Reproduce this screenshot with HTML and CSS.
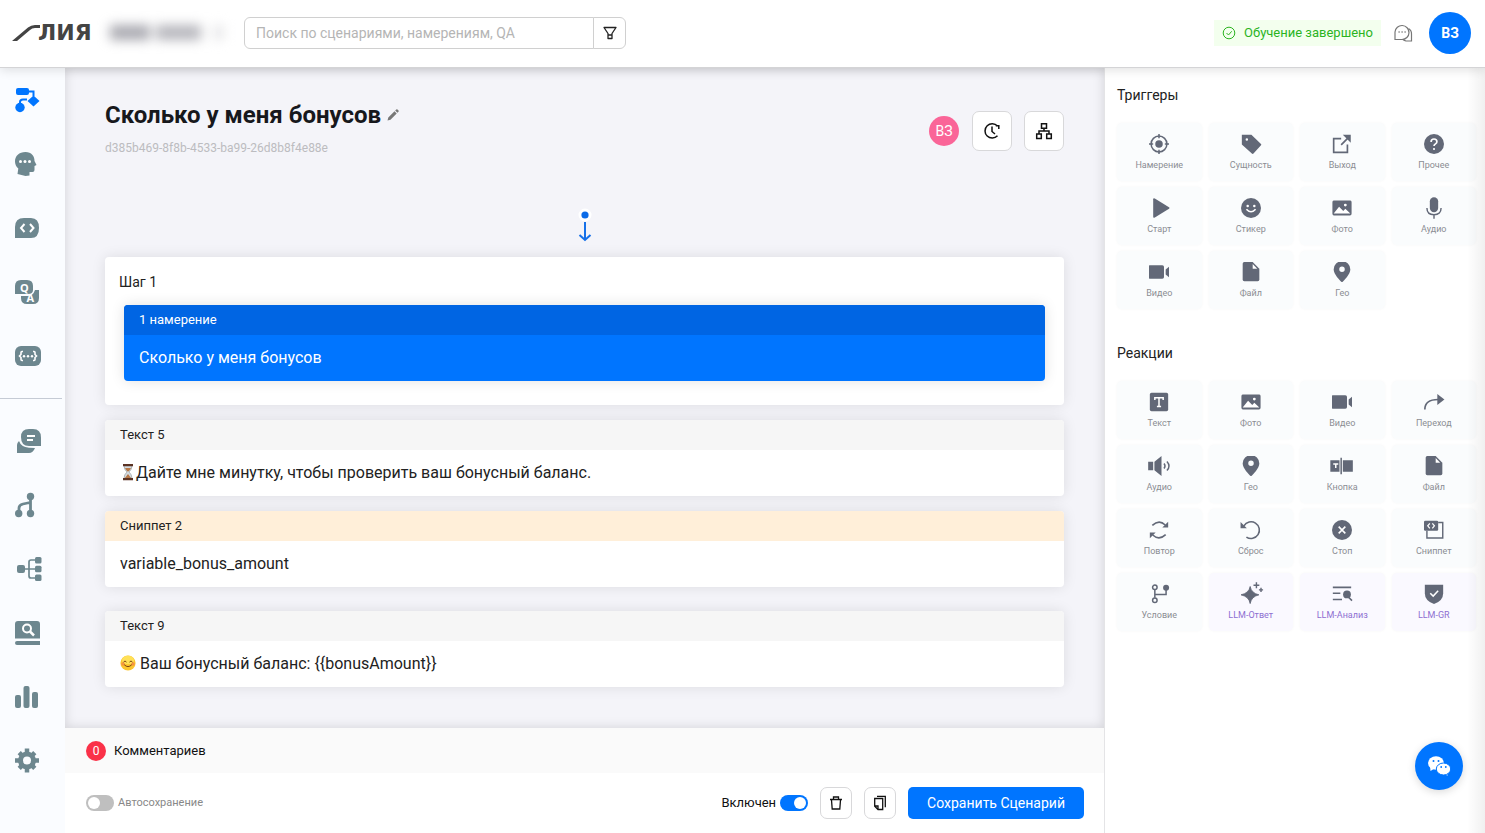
FILE: index.html
```html
<!DOCTYPE html>
<html lang="ru">
<head>
<meta charset="utf-8">
<meta name="viewport" content="width=device-width, initial-scale=1">
<title>Сколько у меня бонусов</title>
<link rel="stylesheet" href="styles.css">
</head>
<body>
<svg class="sprite" aria-hidden="true">
  <symbol id="i-photo" viewBox="0 0 24 24"><path d="M2 3h20a2 2 0 0 1 1.500 2v14a2 2 0 0 1-2 2H2a2 2 0 0 1-1.500-2V5A2 2 0 0 1 2 3z" fill="currentColor"/><path d="M2 18.500 8.500 10.500l5 5 2.500-2.500 6 5.500z" fill="#fff"/><circle cx="16" cy="8.500" r="1.700" fill="#fff"/></symbol>
  <symbol id="i-video" viewBox="0 0 24 24"><rect x="-1" y="4" width="19" height="16" rx="2" fill="currentColor"/><path d="M20 9l5-4v14l-5-4z" fill="currentColor"/></symbol>
  <symbol id="i-file" viewBox="0 0 24 24"><path d="M4 0h10l8 8v13a2 2 0 0 1-2 2H4a2 2 0 0 1-2-2V2a2 2 0 0 1 2-2z" fill="currentColor"/><path d="M14 2.500v5.500h5.500z" fill="#fff"/></symbol>
  <symbol id="i-geo" viewBox="0 0 24 24"><path d="M12-1a10 10 0 0 0-10 10c0 6.500 10 15.500 10 15.500S22 15.500 22 9A10 10 0 0 0 12-1zm0 13a3.300 3.300 0 1 1 0-6.600 3.300 3.300 0 0 1 0 6.600z" fill="currentColor"/></symbol>
</svg>

<header class="header">
  <a class="logo" href="#" aria-label="ЛИЯ">
    <svg class="logo-tail" viewBox="0 0 28 16" aria-hidden="true"><path d="M0 16 16 2.500Q19 0 23 0h5v3h-5q-3 0-5 2L5 16z" fill="#444"/></svg>
    <span>ЛИЯ</span>
  </a>
  <div class="project" aria-hidden="true"><i></i><b></b><em></em></div>
  <form class="search">
    <input type="search" aria-label="Поиск" placeholder="Поиск по сценариями, намерениям, QA">
    <button type="button" aria-label="Фильтр"><svg width="14" height="14" viewBox="0 0 14 14" fill="none" stroke="#222" stroke-width="1.300" stroke-linejoin="round"><path d="M1 1.500h12L9 7.500v5H5v-5zM5 9h4"/></svg></button>
  </form>
  <div class="status">
    <svg width="14" height="14" viewBox="0 0 14 14" fill="none" stroke="#2bb41f"><circle cx="7" cy="7" r="5.800"/><path d="m4.500 7 2 2 3.200-3.700"/></svg>
    <span>Обучение завершено</span>
  </div>
  <button class="plain chat" type="button" aria-label="Сообщения"><svg width="20" height="20" viewBox="0 0 20 20" fill="none" stroke="#777" stroke-width="1.200"><path d="M2 16.500V9a7 7 0 1 1 7 7.500H2z"/><path d="M15.500 5.500A6 6 0 0 1 18.500 11v7H13a6 6 0 0 1-3-1.500"/><path d="M5.500 9h1.200M8.500 9h1.200M11.500 9h1.200" stroke-width="1.500"/></svg></button>
  <button class="user" type="button">ВЗ</button>
</header>

<div class="shell">
  <nav class="sidebar" aria-label="Разделы">
    <a class="nav active" href="#" aria-label="Сценарии"><svg viewBox="0 0 26 26"><g fill="currentColor"><rect x="1" y="1" width="13" height="7" rx="2"/><path d="m18.500 8.500 6 5.500-6 5.500-6-5.500z"/><circle cx="5" cy="20.500" r="4.700"/></g><path d="M14 4.500h4.500V9M5 17v-2q0-2.500 3-2.500h4" fill="none" stroke="currentColor" stroke-width="2"/></svg></a>
    <a class="nav" href="#" aria-label="Намерения"><svg viewBox="0 0 26 26"><path d="M10.500 1c6 0 9 4 9 9l2 4-2 1v4q0 2-2 2h-3v3.500l-4 .5-8-2 .8-5.500C1 15.500 0 13 0 10.500 0 5 4 1 10.500 1z" fill="currentColor"/><g fill="#fff"><circle cx="5.500" cy="10.500" r="1.500"/><circle cx="10" cy="10.500" r="1.500"/><circle cx="14.500" cy="10.500" r="1.500"/></g></svg></a>
    <a class="nav" href="#" aria-label="Сниппеты"><svg viewBox="0 0 26 26"><path d="M0 23V12Q0 3 9 3h7q8 0 8 10t-8 10z" fill="currentColor"/><path d="M9.500 9 6 13l3.500 4M15 9l3.500 4-3.500 4" fill="none" stroke="#fff" stroke-width="2"/></svg></a>
    <a class="nav" href="#" aria-label="Вопросы и ответы"><svg viewBox="0 0 26 26"><path d="M0 15V7q0-6 6-6h6q6 0 6 6v4q0 4-5 4z" fill="currentColor"/><path d="M6 17h7q5 0 7-6h4v8q0 6-6 6h-6q-6 0-6-6z" fill="currentColor"/><text x="5" y="12.500" class="qa">Q</text><text x="11.500" y="23" class="qa">A</text></svg></a>
    <a class="nav" href="#" aria-label="Переменные"><svg viewBox="0 0 26 26"><rect x="0" y="3" width="26" height="20" rx="6" fill="currentColor"/><path d="M8 8.500H7q-1 0-1 1v2L4.500 13 6 14.500v2q0 1 1 1h1M18 8.500h1q1 0 1 1v2l1.500 1.500-1.500 1.500v2q0 1-1 1h-1" fill="none" stroke="#fff" stroke-width="1.600"/><g fill="#fff"><circle cx="9" cy="13.200" r="1.200"/><circle cx="13" cy="13.200" r="1.200"/><circle cx="17" cy="13.200" r="1.200"/></g></svg></a>
    <hr>
    <a class="nav" href="#" aria-label="Диалоги"><svg viewBox="0 0 26 26"><path d="M6 9q0-8 8-8h4q8 0 8 8.500V18H14q-8 0-8-9z" fill="currentColor"/><path d="M2 25V17q0-2 2-4 2 6 10 6.800l6 .2q-2 5-6 5z" fill="currentColor"/><path d="M12 8h8M12 12h6" stroke="#fff" stroke-width="2"/></svg></a>
    <a class="nav" href="#" aria-label="Маршруты"><svg viewBox="0 0 26 26"><g fill="currentColor"><circle cx="15.500" cy="4.500" r="3.700"/><circle cx="3.700" cy="21.500" r="3.700"/><circle cx="15.500" cy="21.500" r="3.700"/></g><path d="M15.500 4v17M4 21v-5q0-3 4-4l7-1.500" fill="none" stroke="currentColor" stroke-width="2.800"/></svg></a>
    <a class="nav" href="#" aria-label="Структура"><svg viewBox="0 0 26 26"><g fill="currentColor"><rect x="2" y="9" width="8" height="8" rx="2"/><rect x="20" y="1" width="6.500" height="6.500" rx="1.500"/><rect x="20" y="9.800" width="6.500" height="6.500" rx="1.500"/><rect x="20" y="18.500" width="6.500" height="6.500" rx="1.500"/></g><path d="M10 13h10M20 4h-4q-2 0-2 2v14q0 2 2 2h4" fill="none" stroke="currentColor" stroke-width="1.700"/></svg></a>
    <a class="nav" href="#" aria-label="База знаний"><svg viewBox="0 0 26 26"><path d="M0 18.500V4q0-3 3-3h19q3 0 3 3v14.500zM2 21h23v4H2q-2 0-2-2t2-2z" fill="currentColor"/><circle cx="12" cy="8.500" r="4" fill="none" stroke="#fff" stroke-width="2"/><path d="m15 11.500 4 4" stroke="#fff" stroke-width="2.500"/></svg></a>
    <a class="nav" href="#" aria-label="Аналитика"><svg viewBox="0 0 26 26"><g fill="currentColor"><rect x="0" y="11" width="6" height="13" rx="2"/><rect x="8.500" y="2" width="6" height="22" rx="2"/><rect x="17" y="8" width="6" height="16" rx="2"/></g></svg></a>
    <a class="nav" href="#" aria-label="Настройки"><svg viewBox="0 0 26 26"><g transform="translate(12 12.500)"><g stroke="currentColor" stroke-width="4.500"><path d="M0-12V12M-12 0H12M-7.800-7.800 7.800 7.800M7.800-7.800-7.800 7.800"/></g><circle r="9" fill="currentColor"/><circle r="4" fill="#fafcff"/></g></svg></a>
  </nav>

  <main class="main">
    <section class="canvas">
      <div class="title-row">
        <div class="title">
          <h1>Сколько у меня бонусов <button class="plain" type="button" aria-label="Переименовать"><svg width="12" height="12" viewBox="0 0 12 12"><path d="M.5 11.500 1.300 8.500 7.500 2.300l2.200 2.200-6.200 6.200zM8.200 1.600 9.300.5q.6-.5 1.200 0l1 1q.5.600 0 1.200L10.400 3.800z" fill="#777"/></svg></button></h1>
          <p>d385b469-8f8b-4533-ba99-26d8b8f4e88e</p>
        </div>
        <div class="tools">
          <span class="editor">ВЗ</span>
          <button class="tool" type="button" aria-label="История"><svg width="20" height="20" viewBox="0 0 20 20" fill="none" stroke="#111" stroke-width="1.500"><path d="M15.500 14.800A7.200 7.200 0 1 1 15.500 5M16.800 8V4.800h-3M10 5.500V10.500l3 2.500"/></svg></button>
          <button class="tool" type="button" aria-label="Схема"><svg width="18" height="18" viewBox="0 0 18 18" fill="none" stroke="#111" stroke-width="1.500"><path d="M6.500 1.700h5v4.600h-5zM1.700 12h4.600v4.600H1.700zM11.700 12h4.600v4.600h-4.600zM9 6.500V9M4 12V9h10v3"/></svg></button>
        </div>
      </div>

      <svg class="entry" width="20" height="36" viewBox="0 0 20 36" aria-hidden="true"><circle cx="10" cy="8" r="6.500" fill="#fff"/><circle cx="10" cy="8" r="3.600" fill="#0b6be8"/><path d="M10 15v17M4.500 28l5.500 5 5.500-5" fill="none" stroke="#1670e8" stroke-width="2"/></svg>

      <article class="card step">
        <h2>Шаг 1</h2>
        <div class="intent"><h3>1 намерение</h3><p>Сколько у меня бонусов</p></div>
      </article>
      <article class="card block">
        <h3>Текст 5</h3>
        <p><svg class="hourglass" width="16" height="18" viewBox="0 0 16 18" role="img" aria-label="Песочные часы"><path d="M4 2.500q0 4 3 6.500-3 2.500-3 6.500h8q0-4-3-6.500 3-2.500 3-6.500z" fill="#d5dce0" stroke="#9aa2a6" stroke-width=".7"/><path d="M5 5h6q-1 2.500-3 3.800Q6 7.500 5 5zM8 11l3.500 4.500h-7z" fill="#b87949"/><path d="M3 1h10v2.200H3zM3 15h10v2.200H3z" fill="#5b3324"/></svg>Дайте мне минутку, чтобы проверить ваш бонусный баланс.</p>
      </article>
      <article class="card block snippet">
        <h3>Сниппет 2</h3>
        <p>variable_bonus_amount</p>
      </article>
      <article class="card block last">
        <h3>Текст 9</h3>
        <p><svg class="smile" width="16" height="16" viewBox="0 0 16 16" role="img" aria-label="Улыбка"><circle cx="8" cy="8" r="7.600" fill="#fbc52d"/><ellipse cx="8" cy="5" rx="6" ry="4.300" fill="#ffe158"/><g fill="#f47e4a" opacity=".7"><circle cx="3" cy="9" r="1.800"/><circle cx="13" cy="9" r="1.800"/></g><path d="M3.700 6.800Q5 4.800 6.300 6.800M9.700 6.800Q11 4.800 12.300 6.800M4.500 10q3.500 3.500 7 0" fill="none" stroke="#7a4314" stroke-linecap="round"/></svg> Ваш бонусный баланс: {{bonusAmount}}</p>
      </article>
    </section>

    <footer class="footer">
      <div class="comments"><span class="count">0</span><span>Комментариев</span></div>
      <div class="actions">
        <label class="autosave"><input class="switch" type="checkbox" role="switch"><span>Автосохранение</span></label>
        <label class="enabled"><span>Включен</span><input class="switch" type="checkbox" role="switch" checked></label>
        <button class="icon-btn" type="button" aria-label="Удалить"><svg width="14" height="14" viewBox="0 0 14 14" fill="none" stroke="#111" stroke-width="1.300"><path d="M1 3.500h12M4.500 3V1h5v2M2.500 4l.7 9h7.600l.7-9"/></svg></button>
        <button class="icon-btn" type="button" aria-label="Копировать"><svg width="14" height="16" viewBox="0 0 14 16" fill="none" stroke="#111" stroke-width="1.300"><path d="M4 1.300h8.300v11M1.700 3.500h8v11H5L1.700 11.300zM2 11h3v3.300"/></svg></button>
        <button class="save" type="button">Сохранить Сценарий</button>
      </div>
    </footer>
  </main>

  <aside class="panel">
    <h2>Триггеры</h2>
    <div class="tiles">
      <button type="button"><svg viewBox="0 0 24 24"><circle cx="12" cy="12" r="9.500" fill="none" stroke="currentColor" stroke-width="1.800"/><circle cx="12" cy="12" r="4.500" fill="currentColor"/><path d="M12 0v5M12 19v5M0 12h5M19 12h5" stroke="currentColor" stroke-width="1.800"/></svg>Намерение</button>
      <button type="button"><svg viewBox="0 0 24 24"><path d="M1 1h11.500L24 12q.8.800 0 1.600L15 23.500q-1 1-2 0L1 12.500zM7 5a1.500 1.500 0 1 0 0 3 1.500 1.500 0 0 0 0-3z" fill="currentColor" fill-rule="evenodd"/></svg>Сущность</button>
      <button type="button"><svg viewBox="0 0 24 24"><path d="M11 5.500H2V22h16.500v-9.500M11 13l8-8" fill="none" stroke="currentColor" stroke-width="2"/><path d="M13 1h9.500v9.500z" fill="currentColor"/></svg>Выход</button>
      <button type="button"><svg viewBox="0 0 24 24"><circle cx="12" cy="12" r="12" fill="currentColor"/><path d="M8.500 9.500q0-3.500 3.500-3.500t3.500 3.200q0 1.500-1.700 2.600Q12 13 12 14.500" fill="none" stroke="#fff" stroke-width="2"/><circle cx="12" cy="18" r="1.300" fill="#fff"/></svg>Прочее</button>
      <button type="button"><svg viewBox="0 0 24 24"><path d="M5 1.500q0-2 2-1L24 11q1.500 1 0 2L7 23.500q-2 1-2-1z" fill="currentColor"/></svg>Старт</button>
      <button type="button"><svg viewBox="0 0 24 24"><circle cx="12" cy="12" r="12" fill="currentColor"/><path d="M6.500 13.500q5.500 6 11 0" fill="none" stroke="#fff" stroke-width="2"/><circle cx="8" cy="9.500" r="1.500" fill="#fff"/><circle cx="16" cy="9.500" r="1.500" fill="#fff"/></svg>Стикер</button>
      <button type="button"><svg viewBox="0 0 24 24"><use href="#i-photo"/></svg>Фото</button>
      <button type="button"><svg viewBox="0 0 24 24"><rect x="7" y="-1" width="10" height="18" rx="5" fill="currentColor"/><path d="M3.500 12q0 8 8.500 8t8.500-8M12 20v5" fill="none" stroke="currentColor" stroke-width="1.700"/></svg>Аудио</button>
      <button type="button"><svg viewBox="0 0 24 24"><use href="#i-video"/></svg>Видео</button>
      <button type="button"><svg viewBox="0 0 24 24"><use href="#i-file"/></svg>Файл</button>
      <button type="button"><svg viewBox="0 0 24 24"><use href="#i-geo"/></svg>Гео</button>
    </div>
    <h2>Реакции</h2>
    <div class="tiles">
      <button type="button"><svg viewBox="0 0 24 24"><rect x="1" y="1" width="22" height="22" rx="2" fill="currentColor"/><path d="M7 9.500V7h10v2.500M12 7v10M9.500 17.500h5" fill="none" stroke="#fff" stroke-width="1.800"/></svg>Текст</button>
      <button type="button"><svg viewBox="0 0 24 24"><use href="#i-photo"/></svg>Фото</button>
      <button type="button"><svg viewBox="0 0 24 24"><use href="#i-video"/></svg>Видео</button>
      <button type="button"><svg viewBox="0 0 24 24"><path d="M1 21q0-12 16-12" fill="none" stroke="currentColor" stroke-width="2"/><path d="m16 2.500 8.500 6.500-8.500 6.500z" fill="currentColor"/></svg>Переход</button>
      <button type="button"><svg viewBox="0 0 24 24"><path d="M-1 7h6v10h-6zM6.500 7 15 0v24l-8.500-7z" fill="currentColor"/><path d="M18 9q2.500 3 0 6M21.500 6.500q5 5.500 0 11" fill="none" stroke="currentColor" stroke-width="1.700"/></svg>Аудио</button>
      <button type="button"><svg viewBox="0 0 24 24"><use href="#i-geo"/></svg>Гео</button>
      <button type="button"><svg viewBox="0 0 24 24"><path d="M-2 5h11v14H-2zM13 5h12v14H13z" fill="currentColor"/><path d="M11 2v20" stroke="currentColor" stroke-width="1.800"/><path d="M1.500 9.500h6M4.500 9.500v5" stroke="#fff" stroke-width="1.800"/></svg>Кнопка</button>
      <button type="button"><svg viewBox="0 0 24 24"><use href="#i-file"/></svg>Файл</button>
      <button type="button"><svg viewBox="0 0 24 24"><path d="M4 6.500q8-7.500 15.500-.5M20 17.500q-8 7.500-15.500.5" fill="none" stroke="currentColor" stroke-width="2"/><path d="M23 2v7h-7zM1 22v-7h7z" fill="currentColor"/></svg>Повтор</button>
      <button type="button"><svg viewBox="0 0 24 24"><path d="M3.500 7a10 10 0 1 1 3 13.500" fill="none" stroke="currentColor" stroke-width="1.900"/><path d="M-.5 2.500V10H7z" fill="currentColor"/></svg>Сброс</button>
      <button type="button"><svg viewBox="0 0 24 24"><circle cx="12" cy="12" r="12" fill="currentColor"/><path d="m8 8 8 8M16 8l-8 8" stroke="#fff" stroke-width="1.900"/></svg>Стоп</button>
      <button type="button"><svg viewBox="0 0 24 24"><path d="M17 3h5.500v18.500h-19V13" fill="none" stroke="currentColor" stroke-width="1.700"/><rect x="0" y="1" width="17" height="12" rx="1.500" fill="currentColor"/><path d="M7 4 4.500 7 7 10M10 4l2.500 3-2.500 3" fill="none" stroke="#fff" stroke-width="1.500"/></svg>Сниппет</button>
      <button type="button"><svg viewBox="0 0 24 24"><g fill="none" stroke="currentColor" stroke-width="1.800"><circle cx="7" cy="4" r="2.700"/><circle cx="7" cy="19.500" r="2.700"/><path d="M7 6.500v10M7 12.500h13.500V6"/></g><circle cx="20.500" cy="4.500" r="3.600" fill="currentColor"/></svg>Условие</button>
      <button class="llm" type="button"><svg viewBox="0 0 24 24"><path d="M11 3q1.500 8 10.500 10-9 2-10.500 10.500Q9.500 15 0 13 9.500 11 11 3z" fill="currentColor" stroke="currentColor"/><path d="M18.500-2v7M15 1.500h7M24 4.500v5M21.500 7h5" stroke="currentColor" stroke-width="1.700"/></svg>LLM-Ответ</button>
      <button class="llm" type="button"><svg viewBox="0 0 24 24"><path d="M1 4h22M1 11h9M1 18.500h11M19 15l5 5" stroke="currentColor" stroke-width="1.900"/><circle cx="18" cy="12.500" r="4.700" fill="currentColor"/></svg>LLM-Анализ</button>
      <button class="llm" type="button"><svg viewBox="0 0 24 24"><path d="M1 1h22v10q0 9-11 13Q1 20 1 11z" fill="currentColor"/><path d="m7.500 11 3.500 3.500L17 8" fill="none" stroke="#fff" stroke-width="1.800"/></svg>LLM-GR</button>
    </div>
  </aside>
</div>

<button class="fab" type="button" aria-label="Чат поддержки"><svg width="24" height="24" viewBox="0 0 24 24"><ellipse cx="9" cy="9" rx="8" ry="6.800" fill="#fff"/><path d="m3 12 .5 5 4-2.500zM19 18l2 3.500-4.500-1z" fill="#fff"/><ellipse cx="16.500" cy="15" rx="7.200" ry="6" fill="#fff" stroke="#0075ff"/><g fill="#0075ff"><circle cx="6.500" cy="7" r="1"/><circle cx="11.500" cy="7" r="1"/><circle cx="14.200" cy="13" r=".9"/><circle cx="18.800" cy="13" r=".9"/></g></svg></button>
</body>
</html>
```

FILE: styles.css
```css
* { box-sizing: border-box; }
body {
  margin: 0;
  min-height: 100vh;
  display: flex;
  flex-direction: column;
  background: #fff;
  color: #222;
  font-family: Roboto, "Noto Sans", sans-serif;
  font-size: 14px;
  line-height: 20px;
}
h1, h2, h3, p { margin: 0; font-weight: 400; }
button, input { font: inherit; color: inherit; }
button { padding: 0; cursor: pointer; }
svg { flex: none; }
.sprite { position: absolute; width: 0; height: 0; }
.plain { border: 0; background: none; }

.header {
  position: relative;
  z-index: 2;
  display: flex;
  align-items: center;
  min-height: 68px;
  padding: 0 14px 2px 12px;
  background: #fff;
  border-bottom: 1px solid #d4d4d6;
  box-shadow: 0 2px 10px rgba(0, 0, 0, .12);
}
.logo {
  display: flex;
  align-items: center;
  width: 82px;
  color: #444;
  font: 700 22px/22px "DejaVu Sans", sans-serif;
  text-decoration: none;
}
.logo-tail { width: 28px; height: 16px; margin-right: -2px; }
.project {
  display: flex;
  gap: 6px;
  width: 130px;
  margin-right: 6px;
  padding-left: 16px;
  filter: blur(6px);
}
.project * { height: 15px; background: #a9a9b0; }
.project i { width: 42px; }
.project b { width: 48px; background: #b6b6bc; }
.project em { width: 12px; margin-left: 6px; background: #e8e8ea; }
.search { display: flex; width: 382px; height: 32px; margin-left: 14px; }
.search input {
  flex: 1;
  min-width: 0;
  padding: 0 11px;
  border: 1px solid #d0d0d0;
  border-radius: 6px 0 0 6px;
  outline: 0;
  background: #fff;
}
.search input::placeholder { color: #b5b5b5; opacity: 1; }
.search button {
  display: grid;
  place-items: center;
  width: 33px;
  margin-left: -1px;
  border: 1px solid #d0d0d0;
  border-radius: 0 6px 6px 0;
  background: #fff;
}
.status {
  display: flex;
  align-items: center;
  gap: 8px;
  height: 26px;
  margin-left: auto;
  padding: 0 8px;
  background: #f3ffee;
  color: #2bb41f;
  font-size: 13px;
}
.chat { display: flex; margin: 0 16px 0 12px; }
.user {
  width: 42px;
  height: 42px;
  border: 0;
  border-radius: 50%;
  background: #0075ff;
  color: #fff;
  font-weight: 700;
}

.shell { flex: 1; display: flex; }
.sidebar { width: 65px; flex: none; background: #fafcff; color: #6d878f; }
.nav { display: flex; align-items: center; height: 64px; padding-left: 15px; color: inherit; }
.nav svg { width: 26px; height: 26px; overflow: visible; }
.nav.active { color: #0075ff; }
.qa { fill: #fff; font: 700 11px "Noto Sans", sans-serif; }
.sidebar hr { margin: 10px 3px 10px 0; border: 0; border-top: 1px solid #c5cbd5; }

.main { flex: 1; min-width: 0; display: flex; flex-direction: column; }
.canvas {
  flex: 1;
  display: flex;
  flex-direction: column;
  padding: 33px 40px 32px;
  background: #f4f4f9;
  box-shadow: inset 0 0 12px rgba(0, 0, 0, .14);
}
.title-row { display: flex; justify-content: space-between; height: 104px; }
.title h1 { color: #17181c; font-size: 24px; line-height: 28px; font-weight: 700; }
.title h1 button { display: inline-flex; vertical-align: 2px; }
.title p { margin-top: 9px; color: #bcbcc0; font-size: 12px; line-height: 20px; }
.tools { display: flex; align-items: center; gap: 12px; height: 40px; margin-top: 10px; }
.editor {
  width: 30px;
  margin-right: 1px;
  border-radius: 50%;
  background: #fa6598;
  color: #fff;
  line-height: 30px;
  text-align: center;
}
.tool, .icon-btn {
  display: grid;
  place-items: center;
  width: 40px;
  height: 40px;
  border: 1px solid #d8d8da;
  border-radius: 7px;
  background: #fff;
}
.entry { align-self: center; margin: 2px 0 14px; }
.card { border-radius: 4px; background: #fff; box-shadow: 0 0 14px rgba(0, 0, 0, .1); }
.step { padding: 15px 19px 24px; }
.step h2 { margin-left: -5px; font-size: 14px; line-height: 20px; }
.intent {
  overflow: hidden;
  margin-top: 13px;
  border-radius: 4px;
  background: #0075ff;
  color: #fff;
  box-shadow: 0 0 14px rgba(0, 0, 0, .12);
}
.intent h3 { background: #0065e3; }
.card h3 { padding: 0 15px; font-size: 13px; line-height: 30px; }
.card p { padding: 11px 15px; font-size: 16px; line-height: 24px; }
.block { margin-top: 15px; overflow: hidden; }
.block h3 { background: #f6f6f6; }
.block.snippet h3 { background: #ffefd9; }
.block.last { margin-top: 24px; }
.hourglass { vertical-align: -3px; }
.smile { vertical-align: -2px; }

.footer { background: #fff; }
.comments {
  display: flex;
  align-items: center;
  gap: 8px;
  height: 45px;
  padding-left: 21px;
  background: #fafafa;
  color: #111;
  font-size: 13px;
}
.count {
  width: 20px;
  border-radius: 50%;
  background: #fa3148;
  color: #fff;
  font-size: 12px;
  text-align: center;
}
.actions { display: flex; align-items: center; gap: 12px; height: 60px; padding: 0 20px 0 21px; }
.actions label { display: flex; align-items: center; gap: 4px; }
.actions .autosave { margin-right: auto; color: #888; font-size: 11px; }
.enabled { color: #111; font-size: 13px; }
.switch {
  display: flex;
  align-items: center;
  appearance: none;
  width: 28px;
  height: 16px;
  margin: 0;
  padding: 2px;
  border-radius: 8px;
  background: #bfbfbf;
}
.switch::before { content: ""; width: 12px; height: 12px; border-radius: 50%; background: #fff; }
.switch:checked { justify-content: flex-end; background: #0075ff; }
.icon-btn { width: 32px; height: 32px; }
.save {
  height: 32px;
  padding: 0 19px;
  border: 0;
  border-radius: 5px;
  background: #0075ff;
  color: #fff;
}

.panel {
  position: relative;
  flex: none;
  width: 381px;
  padding: 17px 9px 17px 12px;
  border-left: 1px solid #e4e4e6;
  background: #fff;
}
.panel::after {
  content: "";
  position: absolute;
  top: 0;
  right: 0;
  bottom: 0;
  width: 18px;
  background: linear-gradient(to right, rgba(0, 0, 0, 0), rgba(0, 0, 0, .06));
  pointer-events: none;
}
.panel h2 { font-size: 14px; line-height: 20px; }
.tiles { display: grid; grid-template-columns: repeat(4, 1fr); gap: 6px 7px; margin: 18px 0 34px; }
.tiles button {
  display: flex;
  flex-direction: column;
  align-items: center;
  gap: 5px;
  height: 58px;
  padding-top: 11px;
  border: 0;
  border-radius: 5px;
  background: #fafcfd;
  box-shadow: 0 0 3px rgba(0, 0, 0, .04);
  color: #8b8d93;
  font-size: 9px;
  line-height: 12px;
}
.tiles svg { width: 20px; height: 20px; color: #626877; overflow: visible; }
.tiles .llm { background: #faf9ff; color: #8d6fd1; }

.fab {
  position: fixed;
  right: 22px;
  bottom: 43px;
  display: grid;
  place-items: center;
  width: 48px;
  height: 48px;
  border: 0;
  border-radius: 50%;
  background: #0075ff;
  box-shadow: 0 2px 8px rgba(0, 0, 0, .15);
}
```
